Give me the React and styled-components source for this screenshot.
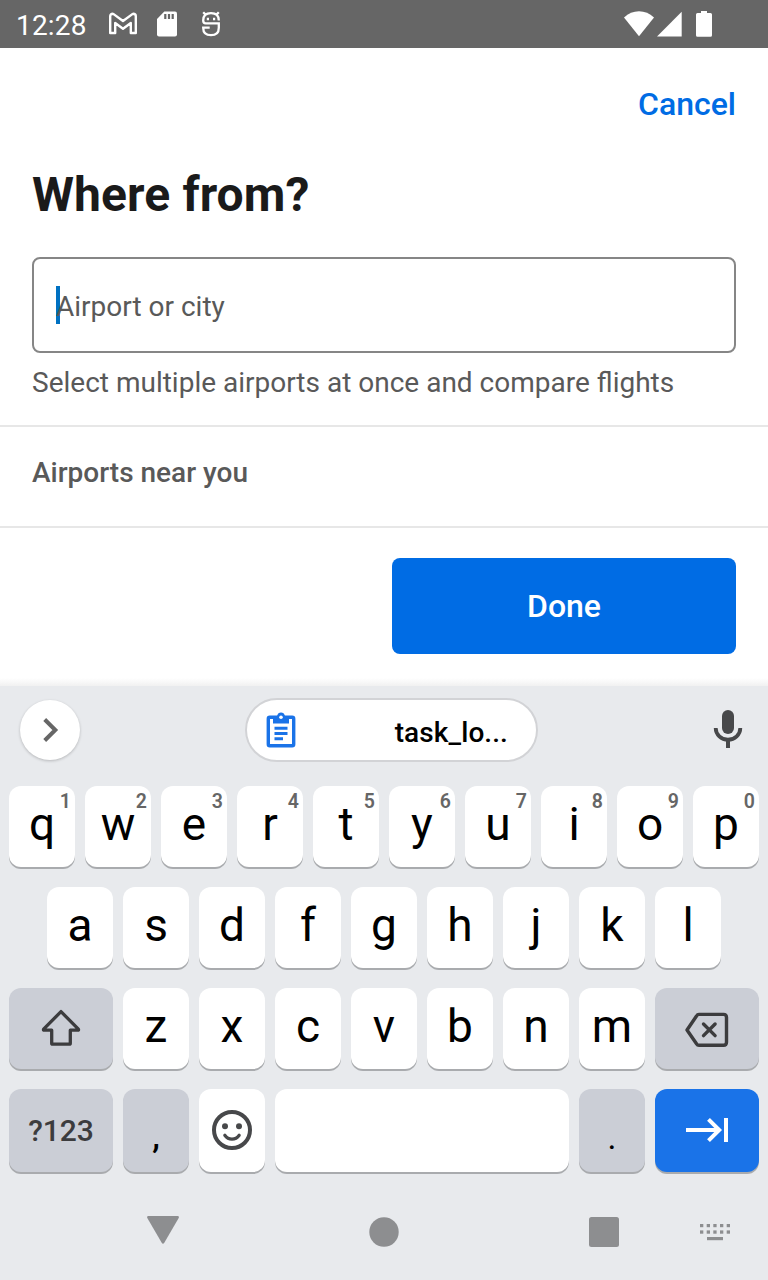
import React from "react";
import styled, { createGlobalStyle } from "styled-components";

const GlobalStyle = createGlobalStyle`
  *, *::before, *::after { box-sizing: border-box; }
  body { margin: 0; background: #fff; font-family: Roboto, "Liberation Sans", sans-serif; }
  button { font: inherit; border: 0; padding: 0; margin: 0; background: none; color: inherit; }
  svg { display: block; flex: none; }
`;

const Screen = styled.div`
  width: 768px;
  height: 1280px;
  display: flex;
  flex-direction: column;
  overflow: hidden;
  background: #fff;
`;

const StatusBar = styled.header`
  height: 48px;
  flex: none;
  display: flex;
  align-items: center;
  justify-content: space-between;
  padding: 0 48px 0 16px;
  background: #666;
  color: #fff;
`;

const Clock = styled.span`
  font-size: 28px;
  line-height: 32px;
  letter-spacing: 0.2px;
  padding-top: 4px;
  width: 84px;
`;

const StatusIcons = styled.div`
  display: flex;
  align-items: center;
`;

const TopBar = styled.div`
  height: 112px;
  flex: none;
  display: flex;
  align-items: center;
  justify-content: flex-end;
  padding-right: 32px;
`;

const CancelButton = styled.button`
  font-size: 32px;
  line-height: 40px;
  font-weight: 500;
  color: #006ce4;
`;

const SearchSection = styled.section`
  flex: none;
  height: 265px;
  padding: 7px 32px 0;
`;

const Title = styled.h1`
  margin: 0;
  font-size: 48px;
  line-height: 56px;
  font-weight: 700;
  letter-spacing: 0.1px;
  color: #1a1a1a;
`;

const Field = styled.div`
  display: flex;
  align-items: center;
  height: 96px;
  margin-top: 34px;
  padding: 3px 22px 0;
  border: 2px solid #868686;
  border-radius: 8px;
`;

const Caret = styled.span`
  width: 4px;
  height: 38px;
  margin: 0 -4px 3px 0;
  background: #0071c2;
`;

const Placeholder = styled.span`
  font-size: 28px;
  line-height: 36px;
  color: #595959;
`;

const Helper = styled.p`
  margin: 12px 0 0;
  font-size: 28px;
  line-height: 36px;
  white-space: nowrap;
  color: #595959;
`;

const NearbyHeader = styled.h2`
  flex: none;
  height: 103px;
  margin: 0;
  padding: 28px 32px 0;
  border: solid #e7e7e7;
  border-width: 2px 0;
  font-size: 28px;
  line-height: 36px;
  font-weight: 500;
  color: #595959;
`;

const Footer = styled.div`
  flex: none;
  height: 158px;
  display: flex;
  justify-content: flex-end;
  padding: 30px 32px 0;
  background: linear-gradient(to bottom, #fff 150px, #f1f1f1 158px);
`;

const DoneButton = styled.button`
  width: 344px;
  height: 96px;
  border-radius: 8px;
  background: #006ce4;
  color: #fff;
  font-size: 32px;
  font-weight: 500;
`;

const Keyboard = styled.div`
  flex: 1;
  display: flex;
  flex-direction: column;
  background: #e8eaed;
`;

const SuggestionBar = styled.div`
  height: 100px;
  flex: none;
  display: flex;
  align-items: flex-start;
  padding: 12px 20px 0;
`;

const ExpandButton = styled.button`
  width: 60px;
  height: 60px;
  margin-top: 2px;
  border-radius: 50%;
  background: #fff;
  box-shadow: 0 1px 3px rgba(0, 0, 0, 0.22);
`;

const ClipChip = styled.button`
  width: 293px;
  height: 64px;
  margin: 0 auto 0 165px;
  display: flex;
  align-items: center;
  justify-content: space-between;
  padding: 0 28px 0 19px;
  border: 2px solid #d2d3d6;
  border-radius: 32px;
  background: #fff;
`;

const ClipText = styled.span`
  font-size: 28px;
  line-height: 36px;
  font-weight: 500;
  letter-spacing: 0.1px;
  color: #000;
  padding-top: 5px;
`;

const MicButton = styled.button`
  margin-top: 11px;
`;

const KeyRows = styled.div`
  display: flex;
  flex-direction: column;
  gap: 20px;
`;

const KeyRow = styled.div`
  display: flex;
  justify-content: center;
  gap: 10px;
`;

const keyColors = {
  light: ["#fff", "#000"],
  grey: ["#cbced6", "#3c3c3e"],
  blue: ["#1a73e8", "#fff"],
};

const Key = styled.button`
  position: relative;
  width: ${(p) => p.$width || 66}px;
  height: ${(p) => p.$height || 81}px;
  padding-bottom: 1px;
  display: flex;
  align-items: center;
  justify-content: center;
  border-radius: 12px;
  background: ${(p) => keyColors[p.$tone || "light"][0]};
  color: ${(p) => keyColors[p.$tone || "light"][1]};
  box-shadow: 0 2px 0 #a9abae;
`;

const Letter = styled.span`
  font-size: 46px;
  line-height: 54px;
  margin-top: -4px;
`;

const Hint = styled.span`
  position: absolute;
  top: 4px;
  right: 4px;
  font-size: 19.5px;
  line-height: 24px;
  font-weight: 600;
  color: #666;
`;

const SymbolsLabel = styled.span`
  font-size: 30px;
  line-height: 36px;
  font-weight: 500;
  padding-top: 1px;
`;

const Punctuation = styled.span`
  font-size: 34px;
  line-height: 40px;
  font-weight: ${(p) => p.$weight || 400};
  padding-top: ${(p) => p.$drop || 14}px;
  color: #000;
`;

const NavBar = styled.nav`
  height: 116px;
  display: flex;
  align-items: center;
  padding: 4px 0 0 147px;
`;

const Slot = styled.span`
  margin-left: ${(p) => p.$gap || 0}px;
`;

const GmailIcon = () => (
  <svg width="30" height="24" viewBox="108 12 30 24" fill="none" stroke="#fff" strokeWidth="2.4" strokeLinejoin="round">
    <path d="M110.200 33V16.200q0-2.400 2.600-2.400l.8.300L123 21l9.400-6.900.8-.3q2.600 0 2.600 2.400V33h-5V23L123 28.800l-7.800-5.800v10z" />
  </svg>
);

const SdIcon = () => (
  <svg width="22" height="26" viewBox="156 11 22 26">
    <path d="M164.300 11.500H175q2 0 2 2v21q0 2-2 2h-16q-2 0-2-2V19z" fill="#fff" />
    <path d="M164.200 14h2.200v5h-2.200zM167.900 14h2.200v5h-2.200zM171.600 14h2.200v5h-2.200z" fill="#666" />
  </svg>
);

const RobotIcon = () => (
  <svg width="22" height="28" viewBox="200 10 22 28" fill="none" stroke="#fff" strokeWidth="2.300">
    <path d="M203.200 12.300l2.600 2.600M218.800 12.300l-2.600 2.600" />
    <path d="M218.800 20.500q0-7.300-7.800-7.300t-7.800 7.300q0 2.800 2.500 2.800h13.100v4.400q0 7.500-7.800 7.500t-7.800-7.500h6.500" />
    <path d="M206.800 19h2.200M213 19h2.200" />
  </svg>
);

const SystemIcons = () => (
  <svg width="96" height="28" viewBox="624 10 96 28" fill="#fff">
    <path d="M624 17.600q6.600-6.300 15-6.300t15 6.300L639 36.200z" />
    <path d="M657 36.500L681.700 11.800V36.500z" />
    <path d="M701 11h6v2h3.500q1.500 0 1.500 1.500v20.700q0 1.500-1.500 1.500h-13q-1.500 0-1.500-1.500V14.500q0-1.500 1.500-1.500h3.500z" />
  </svg>
);

const ChevronIcon = () => (
  <svg width="60" height="60" viewBox="20 700 60 60" fill="none" stroke="#666" strokeWidth="4">
    <path d="M44.700 719.500L55.300 730L44.700 740.500" />
  </svg>
);

const ClipboardIcon = () => (
  <svg width="30" height="36" viewBox="266 712 30 36" fill="none" stroke="#1a73e8">
    <rect x="268.300" y="717.300" width="25.400" height="28.400" rx="1.500" strokeWidth="3.400" />
    <path d="M273 716h4q1-3.400 4-3.400t4 3.400h4v7.500h-16z" fill="#1a73e8" stroke="none" />
    <circle cx="281" cy="717.300" r="1.800" fill="#fff" stroke="none" />
    <path d="M274.500 728.300h13M274.500 733.500h13M274.500 738.700h8.500" strokeWidth="3" />
  </svg>
);

const MicIcon = () => (
  <svg width="40" height="40" viewBox="708 709 40 40">
    <rect x="722" y="710" width="12" height="24" rx="6" fill="#47484a" />
    <path d="M715.700 728a12.300 11.700 0 0 0 24.600 0" fill="none" stroke="#47484a" strokeWidth="3.800" />
    <path d="M726 739h4v9h-4z" fill="#47484a" />
  </svg>
);

const ShiftIcon = () => (
  <svg width="42" height="40" viewBox="40 1008 42 40" fill="none" stroke="#3c3c3e" strokeWidth="3.300" strokeLinejoin="round">
    <path d="M61 1011.600L43.600 1029.200q-.5 1 .7 1h7.400v13q0 1 1 1h16.600q1 0 1-1v-13h7.400q1.200 0 .7-1z" />
  </svg>
);

const BackspaceIcon = () => (
  <svg width="44" height="40" viewBox="685 1008 44 40" fill="none" stroke="#3c3c3e" strokeWidth="3.400">
    <path d="M699 1014.400h24.500q3 0 3 3v24.800q0 3-3 3H699q-1.600 0-2.500-1.400L687 1030l9.500-14q.9-1.600 2.500-1.600z" strokeLinejoin="round" />
    <path d="M703.500 1024l11.600 11.600M715.100 1024L703.500 1035.600" strokeLinecap="round" />
  </svg>
);

const SmileIcon = () => (
  <svg width="42" height="42" viewBox="211 1109 42 42" fill="none" stroke="#47484a">
    <circle cx="232" cy="1130" r="18" strokeWidth="4" />
    <circle cx="225" cy="1126.300" r="3" fill="#47484a" stroke="none" />
    <circle cx="239" cy="1126.300" r="3" fill="#47484a" stroke="none" />
    <path d="M224.800 1135.300q2.800 3.900 7.200 3.900t7.200-3.900" strokeWidth="3.200" strokeLinecap="round" />
  </svg>
);

const TabIcon = () => (
  <svg width="46" height="28" viewBox="684 1116 46 28" fill="none" stroke="#fff" strokeWidth="4">
    <path d="M686 1130h33M708.500 1119.300L719.200 1130L708.500 1140.700M726 1118v24" />
  </svg>
);

const BackNavIcon = () => (
  <svg width="32" height="32" viewBox="147 1216 32 32" fill="#8d8e90">
    <path d="M148.500 1216h29q2 0 1.200 2l-14.400 24.800q-1.300 2-2.600 0L147.300 1218q-.8-2 1.200-2z" />
  </svg>
);

const HomeNavIcon = () => (
  <svg width="30" height="30" viewBox="0 0 30 30" fill="#8d8e90">
    <circle cx="15" cy="15" r="14.700" />
  </svg>
);

const RecentNavIcon = () => (
  <svg width="30" height="30" viewBox="0 0 30 30" fill="#8d8e90">
    <rect width="30" height="30" rx="2.500" />
  </svg>
);

const KeyboardNavIcon = () => (
  <svg width="32" height="18" viewBox="699 1223 32 18" fill="#8d8e90">
    {[700, 706.7, 713.3, 720, 726.7].map((x) => (
      <React.Fragment key={x}>
        <rect x={x} y="1224" width="3.300" height="3.200" />
        <rect x={x} y="1230.400" width="3.300" height="3.300" />
      </React.Fragment>
    ))}
    <rect x="707" y="1237" width="16" height="3.200" />
  </svg>
);

const LetterKeys = ({ chars, hints = "" }) =>
  chars.split("").map((c, i) => (
    <Key key={c}>
      <Letter>{c}</Letter>
      {hints[i] && <Hint>{hints[i]}</Hint>}
    </Key>
  ));

export default function App() {
  return (
    <>
      <GlobalStyle />
      <Screen>
        <StatusBar>
          <StatusIcons>
            <Clock>12:28</Clock>
            <Slot $gap={8}><GmailIcon /></Slot>
            <Slot $gap={18}><SdIcon /></Slot>
            <Slot $gap={22}><RobotIcon /></Slot>
          </StatusIcons>
          <SystemIcons />
        </StatusBar>

        <TopBar>
          <CancelButton>Cancel</CancelButton>
        </TopBar>
        <SearchSection>
          <Title>Where from?</Title>
          <Field>
            <Caret />
            <Placeholder>Airport or city</Placeholder>
          </Field>
          <Helper>Select multiple airports at once and compare flights</Helper>
        </SearchSection>
        <NearbyHeader>Airports near you</NearbyHeader>
        <Footer>
          <DoneButton>Done</DoneButton>
        </Footer>

        <Keyboard>
          <SuggestionBar>
            <ExpandButton><ChevronIcon /></ExpandButton>
            <ClipChip>
              <ClipboardIcon />
              <ClipText>task_lo...</ClipText>
            </ClipChip>
            <MicButton><MicIcon /></MicButton>
          </SuggestionBar>
          <KeyRows>
            <KeyRow><LetterKeys chars="qwertyuiop" hints="1234567890" /></KeyRow>
            <KeyRow><LetterKeys chars="asdfghjkl" /></KeyRow>
            <KeyRow>
              <Key $width={104} $tone="grey"><ShiftIcon /></Key>
              <LetterKeys chars="zxcvbnm" />
              <Key $width={104} $tone="grey"><BackspaceIcon /></Key>
            </KeyRow>
            <KeyRow>
              <Key $width={104} $height={83} $tone="grey"><SymbolsLabel>?123</SymbolsLabel></Key>
              <Key $height={83} $tone="grey"><Punctuation $weight={500} $drop={12}>,</Punctuation></Key>
              <Key $height={83}><SmileIcon /></Key>
              <Key $width={294} $height={83} />
              <Key $height={83} $tone="grey"><Punctuation>.</Punctuation></Key>
              <Key $width={104} $height={83} $tone="blue"><TabIcon /></Key>
            </KeyRow>
          </KeyRows>
          <NavBar>
            <Slot><BackNavIcon /></Slot>
            <Slot $gap={190}><HomeNavIcon /></Slot>
            <Slot $gap={190}><RecentNavIcon /></Slot>
            <Slot $gap={80}><KeyboardNavIcon /></Slot>
          </NavBar>
        </Keyboard>
      </Screen>
    </>
  );
}
